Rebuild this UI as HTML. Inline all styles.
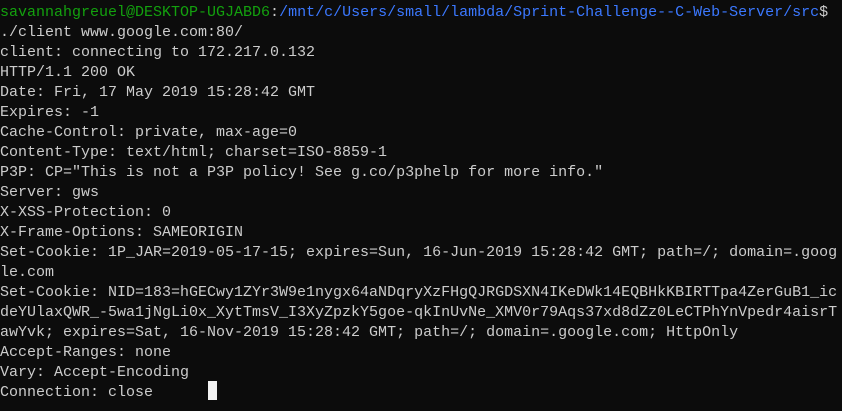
<!DOCTYPE html>
<html><head><meta charset="utf-8"><style>
html,body{margin:0;padding:0;background:#0c0c0c;width:842px;height:411px;overflow:hidden}
.t{font-family:"Liberation Mono",monospace;font-size:15px;line-height:20px;color:#cccccc;white-space:pre;padding-top:3px;position:relative}
.g{color:#13a10e}.b{color:#3b78ff}
.c{position:absolute;left:208px;top:381px;width:9px;height:19px;background:#f2f2f2}
</style></head><body><div class="t"><div><span class="g">savannahgreuel@DESKTOP-UGJABD6</span>:<span class="b">/mnt/c/Users/small/lambda/Sprint-Challenge--C-Web-Server/src</span>$</div><div>./client www.google.com:80/</div><div>client: connecting to 172.217.0.132</div><div>HTTP/1.1 200 OK</div><div>Date: Fri, 17 May 2019 15:28:42 GMT</div><div>Expires: -1</div><div>Cache-Control: private, max-age=0</div><div>Content-Type: text/html; charset=ISO-8859-1</div><div>P3P: CP="This is not a P3P policy! See g.co/p3phelp for more info."</div><div>Server: gws</div><div>X-XSS-Protection: 0</div><div>X-Frame-Options: SAMEORIGIN</div><div>Set-Cookie: 1P_JAR=2019-05-17-15; expires=Sun, 16-Jun-2019 15:28:42 GMT; path=/; domain=.goog</div><div>le.com</div><div>Set-Cookie: NID=183=hGECwy1ZYr3W9e1nygx64aNDqryXzFHgQJRGDSXN4IKeDWk14EQBHkKBIRTTpa4ZerGuB1_ic</div><div>deYUlaxQWR_-5wa1jNgLi0x_XytTmsV_I3XyZpzkY5goe-qkInUvNe_XMV0r79Aqs37xd8dZz0LeCTPhYnVpedr4aisrT</div><div>awYvk; expires=Sat, 16-Nov-2019 15:28:42 GMT; path=/; domain=.google.com; HttpOnly</div><div>Accept-Ranges: none</div><div>Vary: Accept-Encoding</div><div>Connection: close</div></div><div class="c"></div></body></html>
